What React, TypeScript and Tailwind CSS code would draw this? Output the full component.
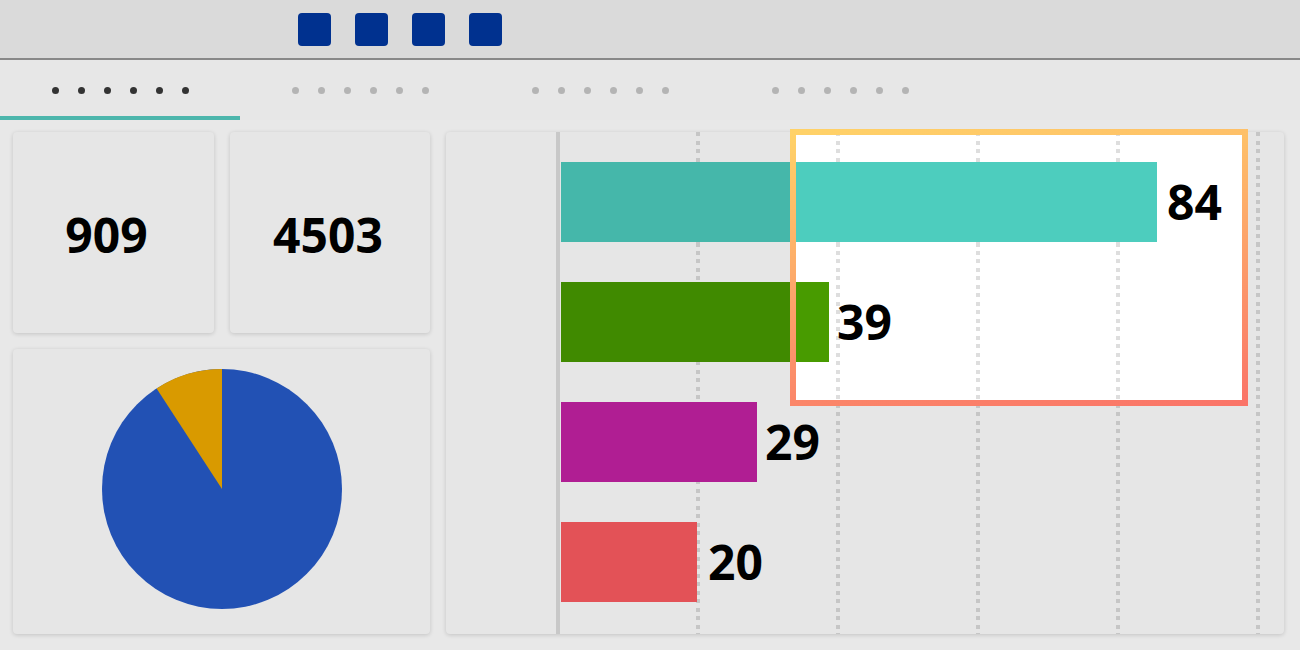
import React from "react";

const bars = [
  { v: 84, w: 596, c: "bg-[#45b7aa]", m: "ml-[10px]" },
  { v: 39, w: 268, c: "bg-[#408a00]", m: "ml-[8px]" },
  { v: 29, w: 196, c: "bg-[#b01e93]", m: "ml-[8px]" },
  { v: 20, w: 136, c: "bg-[#e35257]", m: "ml-[11px]" },
];

const grid = [136, 276, 416, 556, 696];

function Dots({ active }: { active: boolean }) {
  return (
    <div className="flex gap-[19px]">
      {[0, 1, 2, 3, 4, 5].map((i) => (
        <span
          key={i}
          className={
            active
              ? "block w-[7px] h-[7px] rounded-full bg-[#333333]"
              : "block w-[7px] h-[7px] rounded-full bg-[#b4b4b4]"
          }
        />
      ))}
    </div>
  );
}

export default function App() {
  return (
    <div
      className="w-[1300px] h-[650px] overflow-hidden bg-[#e8e8e8] flex flex-col"
      style={{ fontFamily: '"Noto Sans", "Open Sans", sans-serif' }}
    >
      {/* header */}
      <div className="h-[60px] shrink-0 bg-[#dadada] border-b-2 border-[#888888] flex gap-[24px] pl-[298px] pt-[13px]">
        {[0, 1, 2, 3].map((i) => (
          <div key={i} className="w-[33px] h-[33px] rounded-[4px] bg-[#00318f]" />
        ))}
      </div>

      {/* tabs */}
      <div className="h-[60px] shrink-0 flex bg-[#e7e7e7]">
        {[0, 1, 2, 3].map((i) => (
          <div key={i} className="w-[240px] h-full flex flex-col">
            <div className="flex-1 flex items-center justify-center pt-[4px]">
              <Dots active={i === 0} />
            </div>
            <div className={i === 0 ? "h-[4px] bg-[#4db6ac]" : "h-[4px]"} />
          </div>
        ))}
      </div>

      {/* content */}
      <div className="flex-1 flex gap-[16px] pl-[13px] pt-[12px]">
        <div className="w-[417px] flex flex-col gap-[16px]">
          <div className="flex gap-[16px]">
            <div className="w-[201px] h-[201px] rounded-[4px] bg-[#e6e6e6] shadow-[0_1px_4px_rgba(0,0,0,0.16)] flex items-center justify-center pt-[4px] pr-[14px]">
              <span className="text-[48px] font-bold leading-none text-black">909</span>
            </div>
            <div className="w-[200px] h-[201px] rounded-[4px] bg-[#e6e6e6] shadow-[0_1px_4px_rgba(0,0,0,0.16)] flex items-center justify-center pt-[4px] pr-[4px]">
              <span className="text-[48px] font-bold leading-none text-black">4503</span>
            </div>
          </div>
          <div className="h-[285px] rounded-[4px] bg-[#e6e6e6] shadow-[0_1px_4px_rgba(0,0,0,0.16)] flex justify-center pt-[20px] pl-[1px]">
            <svg width="240" height="240" viewBox="0 0 240 240">
              <circle cx="120" cy="120" r="120" fill="#2251b4" />
              <path d="M120 120 L120 0 A120 120 0 0 0 54.6 19.4 Z" fill="#d99a00" />
            </svg>
          </div>
        </div>

        <div className="relative w-[838px] h-[502px] rounded-[4px] bg-[#e6e6e6] shadow-[0_1px_4px_rgba(0,0,0,0.16)] flex">
          <div className="w-[110px]" />
          <div className="w-[4px] h-full bg-[#c8c8c8]" />
          <div className="relative flex-1 pl-[1px]">
            {grid.map((x) => (
              <div
                key={x}
                className="absolute top-0 bottom-0 w-[4px] bg-[repeating-linear-gradient(to_bottom,#c6c6c6_0_4px,transparent_4px_8.5px)]"
                style={{ left: x }}
              />
            ))}
            <div className="relative flex flex-col gap-[40px] pt-[30px]">
              {bars.map((b) => (
                <div key={b.v} className="flex items-center h-[80px]">
                  <div className={`h-[80px] ${b.c}`} style={{ width: b.w }} />
                  <span className={`${b.m} -mt-[1px] text-[48px] font-bold leading-none text-black`}>
                    {b.v}
                  </span>
                </div>
              ))}
            </div>
          </div>
          {/* highlight lens */}
          <div className="absolute left-[344px] -top-[3px] w-[458px] h-[277px] rounded-[3px] border-[6px] border-solid backdrop-brightness-[1.12] [border-image:linear-gradient(172deg,#ffd268,#fc9a6a_60%,#fa7468)_1]" />
        </div>
      </div>
    </div>
  );
}
